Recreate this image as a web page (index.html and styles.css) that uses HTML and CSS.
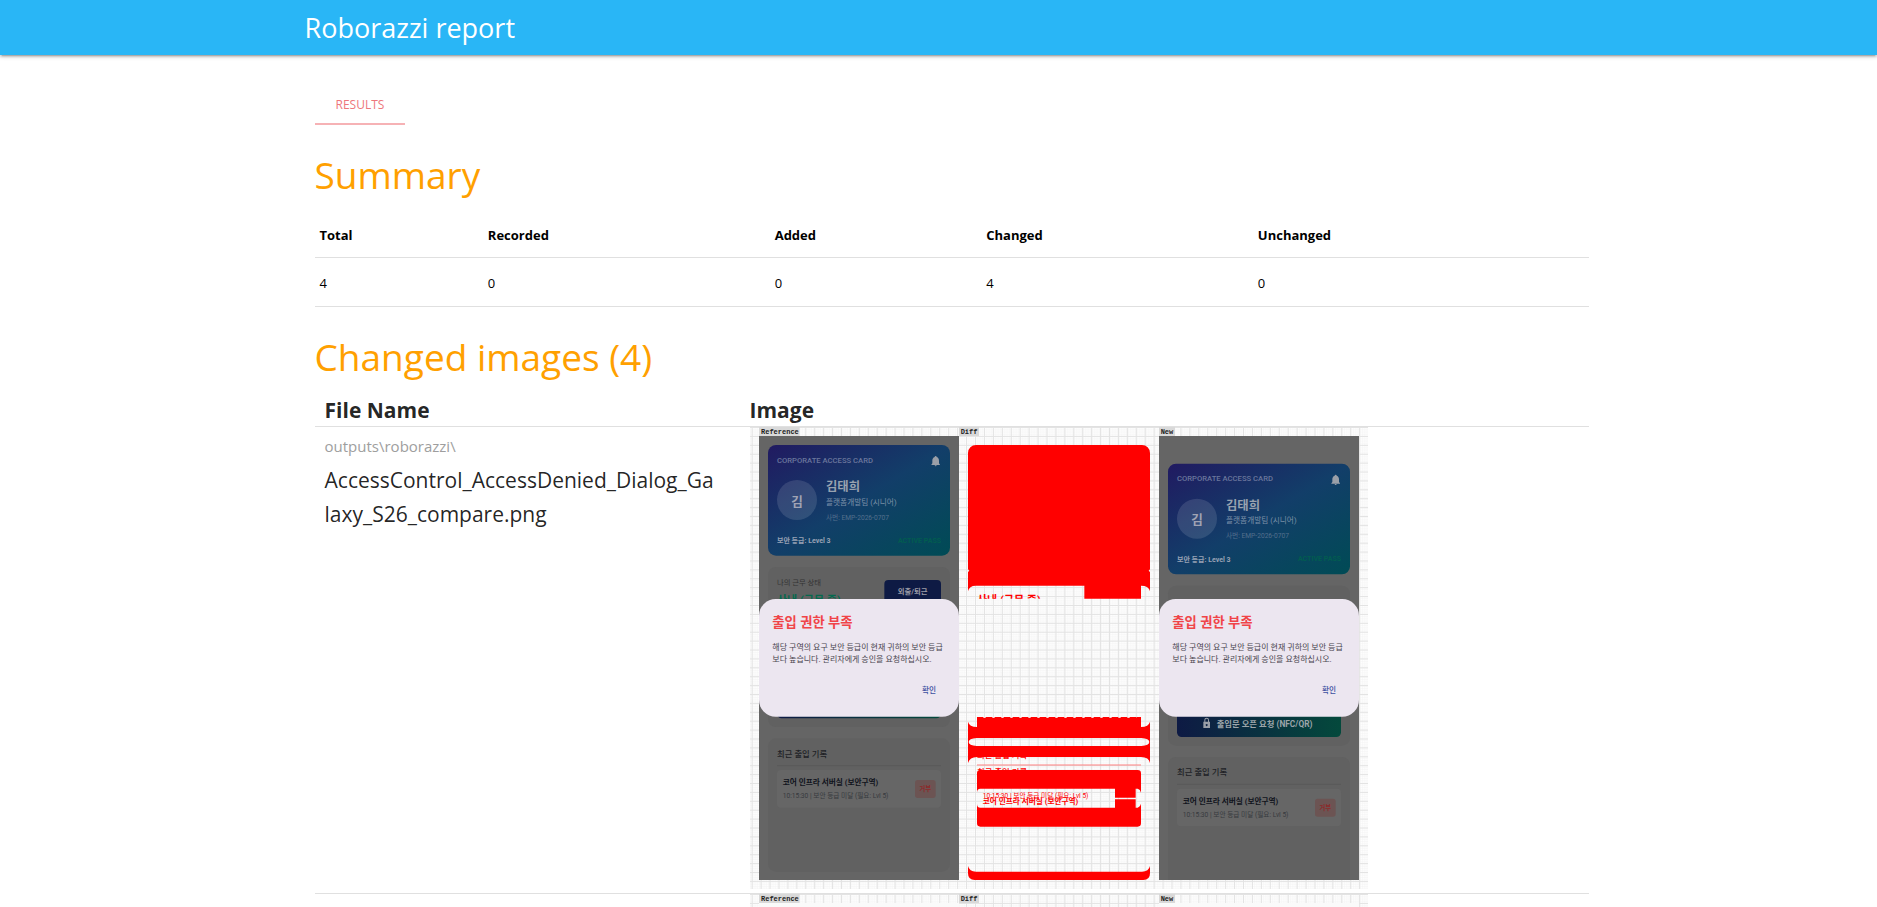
FILE: index.html
```html
<!DOCTYPE html>
<html lang="en">
<head>
<meta charset="utf-8">
<title>Roborazzi report</title>
<link rel="stylesheet" href="styles.css">
</head>
<body>
<header class="nav"><div class="container nav-inner"><a class="brand" href="#">Roborazzi report</a></div></header>
<main class="container content">
  <nav class="tabs"><a class="tab" href="#results">Results</a></nav>
  <section id="results">
    <h1 class="heading">Summary</h1>
    <table class="summary">
      <colgroup><col class="c-total"><col class="c-recorded"><col class="c-added"><col class="c-changed"><col></colgroup>
      <thead><tr><th>Total</th><th>Recorded</th><th>Added</th><th>Changed</th><th>Unchanged</th></tr></thead>
      <tbody><tr><td>4</td><td>0</td><td>0</td><td>4</td><td>0</td></tr></tbody>
    </table>
    <h1 class="heading">Changed images (4)</h1>
    <table class="images">
      <colgroup><col class="c-file"><col></colgroup>
      <thead><tr><th class="file">File Name</th><th>Image</th></tr></thead>
      <tbody>
        <tr>
          <td class="file"><span class="path">outputs\roborazzi\</span><span class="name">AccessControl_AccessDenied_Dialog_Galaxy_S26_compare.png</span></td>
          <td>
<svg class="shot" viewBox="0 0 1854 1386" role="img" aria-label="Reference, diff and new screenshots">
  <defs>
    <pattern id="minor" width="5.4" height="5.4" patternUnits="userSpaceOnUse"><path d="M0 0H5.4M0 0V5.4" stroke="#efefef" stroke-width="2" fill="none"/></pattern>
    <pattern id="major" x="5" width="26.8" height="26.7" patternUnits="userSpaceOnUse"><path d="M1.5 0V26.7M0 1.5H26.8" stroke="#e3e3e3" stroke-width="3" fill="none"/></pattern>
    <linearGradient id="card" x1="0" y1="0" x2="1" y2="1"><stop offset="0" stop-color="#211a61"/><stop offset=".5" stop-color="#123e69"/><stop offset="1" stop-color="#004b55"/></linearGradient>
    <linearGradient id="btn"><stop offset="0" stop-color="#0e1a44"/><stop offset="1" stop-color="#04493c"/></linearGradient>
    <clipPath id="phoneA"><rect x="27" y="27" width="600" height="1332"/></clipPath>
    <clipPath id="phoneB"><rect x="1227" y="27" width="600" height="1332"/></clipPath>
    <clipPath id="diffTop"><rect x="654" y="498" width="546" height="17"/></clipPath>
  </defs>
  <rect width="1854" height="1386" fill="#fff"/>
  <rect width="1854" height="1386" fill="url(#minor)"/>
  <rect width="1854" height="1386" fill="url(#major)"/>
  <g class="label">
    <rect x="27" y="0" width="122" height="27"/><text x="33" y="20">Reference</text>
    <rect x="627" y="0" width="60" height="27"/><text x="632" y="20">Diff</text>
    <rect x="1227" y="0" width="48" height="27"/><text x="1232" y="20">New</text>
  </g>

  <g clip-path="url(#phoneA)">
    <rect class="screen" x="27" y="27" width="600" height="1332"/>
    <g>
      <rect x="54" y="54" width="546" height="332" rx="24" fill="url(#card)"/>
      <text class="t-org" x="81" y="107">CORPORATE ACCESS CARD</text>
      <path class="bell" d="M557 87c-2 0-3 1-3 3-5 2-7 6-7 11v8l-3 4v1h26v-1l-3-4v-8c0-5-2-9-7-11 0-2-1-3-3-3zM554 115a3 3 0 0 0 6 0z"/>
      <circle class="avatar" cx="141" cy="219" r="60"/>
      <text class="t-initial" x="141" y="236">김</text>
      <text class="t-name" x="228" y="192">김태희</text>
      <text class="t-team" x="228" y="233">플랫폼개발팀 (시니어)</text>
      <text class="t-id" x="228" y="278">사번: EMP-2026-0707</text>
      <text class="t-level" x="81" y="348">보안 등급: Level 3</text>
      <text class="t-active" x="573" y="347">ACTIVE PASS</text>
      <rect class="panel" x="54" y="420" width="546" height="480" rx="24"/>
      <text class="t-label" x="81" y="474">나의 근무 상태</text>
      <text class="t-status" x="81" y="532">사내 (근무 중)</text>
      <rect x="403" y="459" width="170" height="80" rx="12" fill="#0e1a44"/>
      <text class="t-out" x="488" y="501">외출/퇴근</text>
      <rect x="81" y="770" width="492" height="104" rx="14" fill="url(#btn)"/>
      <rect class="panel" x="54" y="934" width="546" height="400" rx="24"/>
      <text class="t-recent" x="81" y="989">최근 출입 기록</text>
      <path d="M81 1016H573" stroke="#595959" stroke-width="3"/>
      <rect class="item" x="81" y="1029" width="492" height="113" rx="12"/>
      <text class="t-room" x="98" y="1074">코어 인프라 서버실 (보안구역)</text>
      <text class="t-time" x="98" y="1113">10:15:30 | 보안 등급 미달 (필요: Lvl 5)</text>
      <rect class="badge" x="495" y="1059" width="62" height="54" rx="8"/>
      <text class="t-deny" x="526" y="1093">거부</text>
    </g>
    <rect class="dialog" x="27" y="516" width="600" height="353" rx="50"/>
    <text class="t-title" x="67" y="601">출입 권한 부족</text>
    <text class="t-body" x="67" y="670">해당 구역의 요구 보안 등급이 현재 귀하의 보안 등급</text>
    <text class="t-body" x="67" y="704">보다 높습니다. 관리자에게 승인을 요청하십시오.</text>
    <text class="t-ok" x="516" y="799">확인</text>
  </g>

  <g class="diff">
    <path d="M654 78a24 24 0 0 1 24-24h498a24 24 0 0 1 24 24V427l-4 4 4 4v58q-3-17-27-17v39H1003v-39H678q-21 0-24 17v-58l4-4-4-4z"/>
    <g clip-path="url(#diffTop)"><text class="d-status" x="681" y="532">사내 (근무 중)</text></g>
    <path fill-rule="evenodd" d="M681 870H1173v30q23 0 27-16v124q-3-18-27-18H681q-24 0-27-18V884q4 16 27 16zM680 933q-24 2-24 12t24 12h494q24-2 24-12t-24-12z"/>
    <path d="M654 972h27v18q-22 0-27 18z"/>
    <path d="M700 871H1160" stroke="#fff" stroke-width="3" stroke-dasharray="7 20"/>
    <text class="d-recent" x="681" y="993">최근 출입 기록</text>
    <path d="M681 1014H1173" stroke="#ff8080" stroke-width="3"/>
    <text class="d-recent" x="681" y="1045">최근 출입 기록</text>
    <path fill-rule="evenodd" d="M691 1029h472q10 0 10 10v150q0 10-10 10H691q-10 0-10-10v-150q0-10 10-10zM681 1097v33q0 12 10 12h404v-25h62v25h6q8-2 10-12v-33q-2-10-10-12h-6v27h-62v-27H691q-10 0-10 12z"/>
    <text class="d-time" x="698" y="1113">10:15:30 | 보안 등급 미달 (필요: Lvl 5)</text>
    <text class="d-room" x="698" y="1130">코어 인프라 서버실 (보안구역)</text>
    <path d="M654 1317q4 17 24 17h498q20 0 24-17v22q0 20-20 20H674q-20 0-20-20z"/>
  </g>

  <g clip-path="url(#phoneB)">
    <rect class="screen" x="1227" y="27" width="600" height="1332"/>
    <g transform="translate(1200 56)">
      <rect x="54" y="54" width="546" height="332" rx="24" fill="url(#card)"/>
      <text class="t-org" x="81" y="107">CORPORATE ACCESS CARD</text>
      <path class="bell" d="M557 87c-2 0-3 1-3 3-5 2-7 6-7 11v8l-3 4v1h26v-1l-3-4v-8c0-5-2-9-7-11 0-2-1-3-3-3zM554 115a3 3 0 0 0 6 0z"/>
      <circle class="avatar" cx="141" cy="219" r="60"/>
      <text class="t-initial" x="141" y="236">김</text>
      <text class="t-name" x="228" y="192">김태희</text>
      <text class="t-team" x="228" y="233">플랫폼개발팀 (시니어)</text>
      <text class="t-id" x="228" y="278">사번: EMP-2026-0707</text>
      <text class="t-level" x="81" y="348">보안 등급: Level 3</text>
      <text class="t-active" x="573" y="347">ACTIVE PASS</text>
      <rect class="panel" x="54" y="420" width="546" height="480" rx="24"/>
      <rect x="81" y="770" width="492" height="104" rx="14" fill="url(#btn)"/>
      <path class="lock" fill-rule="evenodd" d="M163 828v-5a7 7 0 0 1 14 0v5h3v19h-20v-19zm3 0h8v-5a4 4 0 0 0-8 0zm4 7a3 3 0 1 0 .1 0z"/>
      <text class="t-nfc" x="200" y="844">출입문 오픈 요청 (NFC/QR)</text>
      <rect class="panel" x="54" y="934" width="546" height="400" rx="24"/>
      <text class="t-recent" x="81" y="989">최근 출입 기록</text>
      <path d="M81 1016H573" stroke="#595959" stroke-width="3"/>
      <rect class="item" x="81" y="1029" width="492" height="113" rx="12"/>
      <text class="t-room" x="98" y="1074">코어 인프라 서버실 (보안구역)</text>
      <text class="t-time" x="98" y="1113">10:15:30 | 보안 등급 미달 (필요: Lvl 5)</text>
      <rect class="badge" x="495" y="1059" width="62" height="54" rx="8"/>
      <text class="t-deny" x="526" y="1093">거부</text>
    </g>
    <rect class="dialog" x="1227" y="516" width="600" height="353" rx="50"/>
    <text class="t-title" x="1267" y="601">출입 권한 부족</text>
    <text class="t-body" x="1267" y="670">해당 구역의 요구 보안 등급이 현재 귀하의 보안 등급</text>
    <text class="t-body" x="1267" y="704">보다 높습니다. 관리자에게 승인을 요청하십시오.</text>
    <text class="t-ok" x="1716" y="799">확인</text>
  </g>
</svg>
          </td>
        </tr>
        <tr class="last">
          <td class="file"></td>
          <td>
<svg class="shot" viewBox="0 0 1854 39" role="img" aria-label="Reference, diff and new screenshots">
  <rect width="1854" height="39" fill="#fff"/>
  <rect width="1854" height="39" fill="url(#minor)"/>
  <rect width="1854" height="39" fill="url(#major)"/>
  <rect x="27" y="27" width="600" height="12" fill="#fafafa"/>
  <rect x="1227" y="27" width="600" height="12" fill="#fafafa"/>
  <g class="label">
    <rect x="27" y="0" width="122" height="27"/><text x="33" y="20">Reference</text>
    <rect x="627" y="0" width="60" height="27"/><text x="632" y="20">Diff</text>
    <rect x="1227" y="0" width="48" height="27"/><text x="1232" y="20">New</text>
  </g>
</svg>
          </td>
        </tr>
      </tbody>
    </table>
  </section>
</main>
</body>
</html>
```

FILE: styles.css
```css
* { box-sizing: border-box; }
body { margin: 0; background: #fff; color: rgba(0, 0, 0, .87); font-family: "Open Sans", "Noto Sans", sans-serif; }
.container { width: 70%; margin: 0 auto; }
.nav { background: #29b6f6; box-shadow: 0 2px 2px 0 rgba(0,0,0,.14), 0 3px 1px -2px rgba(0,0,0,.12), 0 1px 5px 0 rgba(0,0,0,.2); }
.nav-inner { padding-left: 23px; }
.brand { display: block; color: #fff; font-size: 27px; line-height: 55px; text-decoration: none; }
.content { padding: 22px 6px 0 33px; }
.tabs { display: flex; height: 48px; }
.tab { padding: 0 21px; border-bottom: 2px solid #f6b2b5; color: #ee767b; font-size: 12px; line-height: 56px; text-decoration: none; text-transform: uppercase; }
.heading { margin: 25px 0 0; color: #ffa000; font-size: 37px; font-weight: 400; line-height: 50px; }
table { width: 100%; border-collapse: collapse; table-layout: fixed; }
tr { border-bottom: 1px solid #e0e0e0; }
th, td { padding: 0; text-align: left; }
.summary { margin-top: 12px; font-size: 13px; line-height: 18px; color: #000; }
.summary td { padding: 16px 5px 14px; }
.summary th { padding: 14px 5px 13px; }
.c-total { width: 13.2%; }
.c-recorded { width: 22.5%; }
.c-added { width: 16.6%; }
.c-changed { width: 21.3%; }
.images { margin-top: 12px; font-size: 21px; line-height: 34px; }
.c-file { width: 435px; }
.images .file { padding: 0 33px 0 10px; }
.images th { line-height: 32px; }
.images td { vertical-align: top; }
.images .last { border-bottom: 0; }
.path { display: block; margin-top: 2px; color: #9e9e9e; font-size: 15px; }
.name { display: block; overflow-wrap: anywhere; }
.shot { display: block; width: 618px; max-width: 100%; height: auto; margin-bottom: 4px; font-family: Roboto, "Noto Sans CJK KR", sans-serif; }
.last .shot { margin-bottom: 0; }

.label rect { fill: #d9d9d9; }
.label text { fill: #222; font: 700 21px "Liberation Mono", monospace; }
.screen { fill: #656565; }
.panel { fill: #616161; }
.item { fill: #666; }
.badge { fill: #6c5453; }
.avatar { fill: #fff; fill-opacity: .12; }
.bell, .lock { fill: #9a9fa8; }
.dialog { fill: #ece6f0; }
.diff { fill: red; }
.t-org { font-size: 23px; font-weight: 500; fill: #6a769c; }
.t-initial { font-size: 38px; font-weight: 700; fill: #a0a3b4; text-anchor: middle; }
.t-name { font-size: 37px; font-weight: 700; fill: #98a2b0; }
.t-team { font-size: 23px; fill: #7d92a8; }
.t-id { font-size: 20px; fill: #536f8d; }
.t-level { font-size: 21px; font-weight: 700; fill: #98a2b5; }
.t-active { font-size: 21px; font-weight: 700; fill: #025c50; text-anchor: end; }
.t-label { font-size: 22px; fill: #333; }
.t-status, .d-status { font-size: 33px; font-weight: 700; }
.t-status { fill: #06694e; }
.t-out { font-size: 22px; font-weight: 700; fill: #9c9ca6; text-anchor: middle; }
.t-nfc { font-size: 25px; font-weight: 700; fill: #9ca5aa; }
.t-recent, .d-recent { font-size: 25px; font-weight: 500; }
.t-recent { fill: #202226; }
.t-room, .d-room { font-size: 23px; font-weight: 700; }
.t-room { fill: #10131c; }
.t-time, .d-time { font-size: 20px; }
.t-time { fill: #373a3e; }
.t-deny { font-size: 19px; font-weight: 700; fill: #8c2a2a; text-anchor: middle; }
.t-title { font-size: 40px; font-weight: 700; fill: #f04448; }
.t-body { font-size: 24px; fill: #49454f; }
.t-ok { font-size: 23px; font-weight: 500; fill: #3c50a0; }
```
